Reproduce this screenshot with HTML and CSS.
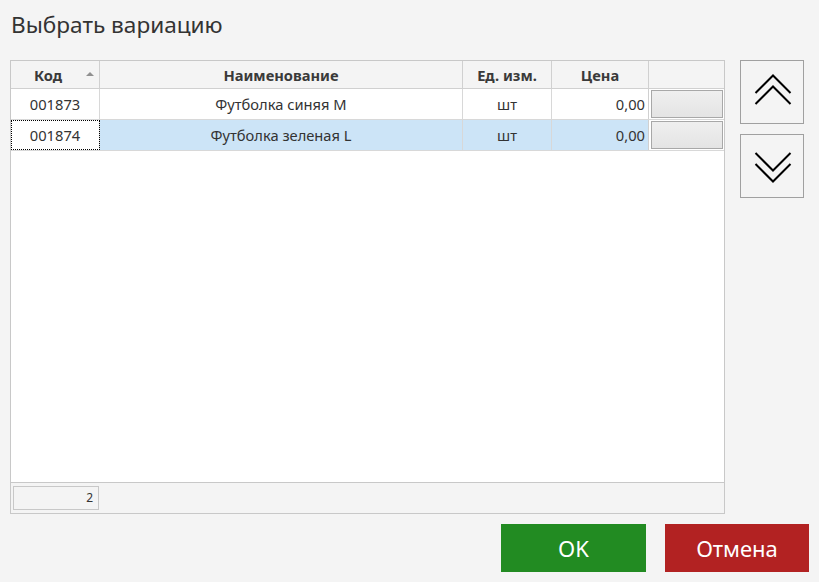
FILE: index.html
```html
<!DOCTYPE html>
<html lang="ru">
<head>
<meta charset="utf-8">
<title>Выбрать вариацию</title>
<link rel="stylesheet" href="styles.css">
</head>
<body>
<div class="dialog">
  <h1 class="title">Выбрать вариацию</h1>
  <div class="main">
    <div class="grid">
      <div class="row head">
        <div class="cell c-code">Код<span class="sort"></span></div>
        <div class="cell">Наименование</div>
        <div class="cell">Ед. изм.</div>
        <div class="cell">Цена</div>
        <div class="cell c-last"></div>
      </div>
      <div class="row">
        <div class="cell">001873</div>
        <div class="cell">Футболка синяя M</div>
        <div class="cell">шт</div>
        <div class="cell num">0,00</div>
        <div class="cell c-btn"><span class="cellbtn"></span></div>
      </div>
      <div class="row selected">
        <div class="cell focus">001874</div>
        <div class="cell">Футболка зеленая L</div>
        <div class="cell">шт</div>
        <div class="cell num">0,00</div>
        <div class="cell c-btn"><span class="cellbtn"></span></div>
      </div>
      <div class="empty"></div>
      <div class="footer">
        <div class="count">2</div>
      </div>
    </div>
    <div class="side">
      <button class="navbtn" aria-label="Вверх">
        <svg width="64" height="64" viewBox="0 0 64 64"><polyline points="15.5,33 33,15.5 50.5,33" fill="none" stroke="#000" stroke-width="2"/><polyline points="15.5,44 33,26.5 50.5,44" fill="none" stroke="#000" stroke-width="2"/></svg>
      </button>
      <button class="navbtn" aria-label="Вниз">
        <svg width="64" height="64" viewBox="0 0 64 64"><polyline points="15.5,19 33,36.5 50.5,19" fill="none" stroke="#000" stroke-width="2"/><polyline points="15.5,30 33,47.5 50.5,30" fill="none" stroke="#000" stroke-width="2"/></svg>
      </button>
    </div>
  </div>
  <div class="actions">
    <button class="btn ok">OK</button>
    <button class="btn cancel">Отмена</button>
  </div>
</div>
</body>
</html>
```

FILE: styles.css
```css
html, body {
  margin: 0;
  padding: 0;
}
body {
  background: #f4f4f4;
  font-family: "Noto Sans", "Open Sans", sans-serif;
  color: #333;
}
.dialog {
  width: 819px;
  height: 582px;
  display: flex;
  flex-direction: column;
  box-sizing: border-box;
}
.title {
  margin: 0;
  height: 60px;
  box-sizing: border-box;
  padding: 10px 0 0 11px;
  font-size: 22.6px;
  font-weight: normal;
  color: #333;
  line-height: 30px;
}
.main {
  display: flex;
  gap: 15px;
  padding-left: 10px;
}
.grid {
  width: 715px;
  height: 454px;
  box-sizing: border-box;
  border: 1px solid #c8c8c8;
  background: #fff;
  display: flex;
  flex-direction: column;
}
.row {
  display: grid;
  grid-template-columns: 89px 363px 89px 97px 75px;
  height: 31px;
  border-bottom: 1px solid #d8d8d8;
  box-sizing: border-box;
  font-size: 14.7px;
}
.row.head {
  height: 28px;
  background: #f4f4f4;
  font-weight: bold;
  color: #3a3a3a;
  border-bottom: 1px solid #d0d0d0;
}
.cell {
  display: flex;
  align-items: center;
  justify-content: center;
  border-right: 1px solid #d8d8d8;
  box-sizing: border-box;
  white-space: nowrap;
  position: relative;
}
.row.head .cell {
  border-right-color: #d0d0d0;
}
.row.head .cell.c-code {
  padding-right: 14px;
}
.cell.num {
  justify-content: flex-end;
  padding-right: 3px;
}
.cell.c-last, .cell.c-btn {
  border-right: none;
  border-left: 1px solid #d0d0d0;
  margin-left: -1px;
}
.cell.c-btn {
  padding: 1px 1px 1px 2px;
  align-items: stretch;
  justify-content: stretch;
  background: #fff;
}
.cellbtn {
  flex: 1;
  border: 1px solid #a8a8a8;
  background: linear-gradient(#efefef, #e4e4e4);
}
.sort {
  position: absolute;
  right: 5px;
  top: 11px;
  width: 0;
  height: 0;
  border-left: 4px solid transparent;
  border-right: 4px solid transparent;
  border-bottom: 4px solid #909090;
}
.row.selected {
  background: #cce4f7;
}
.cell.focus {
  background: #fff;
  outline: 1px dotted #000;
  outline-offset: -1px;
}
.empty {
  flex: 1;
}
.footer {
  height: 31px;
  border-top: 1px solid #c8c8c8;
  background: #f4f4f4;
  box-sizing: border-box;
  padding: 3px 2px;
}
.count {
  width: 86px;
  height: 24px;
  box-sizing: border-box;
  border: 1px solid #c8c8c8;
  font-size: 12px;
  text-align: right;
  padding-right: 5px;
  line-height: 22px;
}
.side {
  display: flex;
  flex-direction: column;
  gap: 10px;
}
.navbtn {
  width: 64px;
  height: 64px;
  padding: 0;
  margin: 0;
  border: 1px solid #a0a0a0;
  background: #f4f4f4;
  box-sizing: border-box;
  display: block;
}
.navbtn svg {
  display: block;
  margin: -1px;
}
.actions {
  display: flex;
  justify-content: flex-end;
  gap: 19px;
  padding: 10px 10px 0 0;
}
.btn {
  height: 48px;
  border: none;
  margin: 0;
  color: #fff;
  font-family: "Noto Sans", "Open Sans", sans-serif;
  font-size: 22px;
}
.btn.ok {
  width: 145px;
  background: #228b22;
}
.btn.cancel {
  width: 144px;
  background: #b22222;
}
```
